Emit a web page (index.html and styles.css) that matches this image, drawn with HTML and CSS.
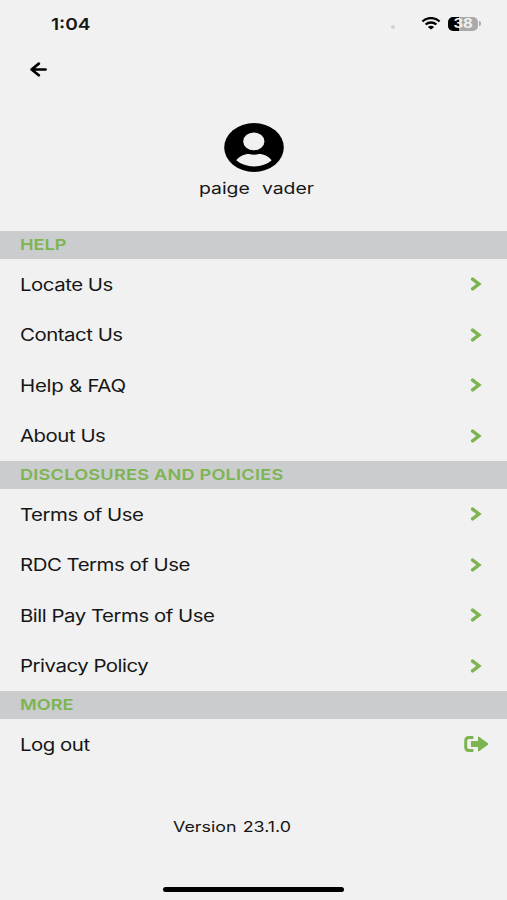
FILE: index.html
```html
<!DOCTYPE html>
<html lang="en">
<head>
  <meta charset="UTF-8">
  <meta name="viewport" content="width=device-width, initial-scale=1.0">
  <title>Menu</title>
  <link rel="stylesheet" href="styles.css">
</head>
<body>
  <svg width="0" height="0" class="defs">
    <symbol id="chevron" viewBox="0 0 12 14">
      <path d="M2.6 2.1 L8.9 7 L2.6 11.9" fill="none" stroke="#7db451" stroke-width="3.4" stroke-linecap="round"/>
    </symbol>
  </svg>

  <div class="status-bar">
    <span class="time">1:04</span>
    <div class="status-icons">
      <span class="signal-dot"></span>
      <svg class="wifi" width="20" height="13" viewBox="0 0 20 13">
        <path d="M1.4 4.5 C6 -0.1 14 -0.1 18.6 4.5 M4.6 7.5 C7.5 4.8 12.5 4.8 15.4 7.5" fill="none" stroke="#000" stroke-width="2.3"/>
        <path d="M6.8 10 Q10 7.6 13.2 10 L10 12.6 Z"/>
      </svg>
      <div class="battery"><span>38</span></div>
      <span class="battery-tip"></span>
    </div>
  </div>

  <div class="nav">
    <svg width="18" height="15" viewBox="0 0 18 15">
      <path d="M8.8 1.6 L1.6 7.5 L8.8 13.2 M2 7.5 H15.6" fill="none" stroke="#000" stroke-width="2.7" stroke-linecap="round" stroke-linejoin="round"/>
    </svg>
  </div>

  <div class="profile">
    <svg width="60" height="49" viewBox="0 0 60 49">
      <ellipse cx="30" cy="24.5" rx="29.8" ry="24.4"/>
      <ellipse cx="29.8" cy="18.4" rx="10.6" ry="8.9" fill="#f1f1f1"/>
      <path d="M12.2 37.3 C15 33.5 20 31 25 31 Q30 32.4 35 31 C40 31 45 33.5 47.6 37.3 C43 41.3 37 43.5 30 43.5 C23 43.5 17 41.3 12.2 37.3 Z" fill="#f1f1f1"/>
    </svg>
    <div class="name"><span>paige</span><span>vader</span></div>
  </div>

  <h2><span>HELP</span></h2>
  <ul>
    <li><span>Locate Us</span><svg class="chevron"><use href="#chevron"/></svg></li>
    <li><span>Contact Us</span><svg class="chevron"><use href="#chevron"/></svg></li>
    <li><span class="faq">Help &amp; FAQ</span><svg class="chevron"><use href="#chevron"/></svg></li>
    <li><span>About Us</span><svg class="chevron"><use href="#chevron"/></svg></li>
  </ul>

  <h2><span class="long">DISCLOSURES AND POLICIES</span></h2>
  <ul>
    <li><span>Terms of Use</span><svg class="chevron"><use href="#chevron"/></svg></li>
    <li><span>RDC Terms of Use</span><svg class="chevron"><use href="#chevron"/></svg></li>
    <li><span>Bill Pay Terms of Use</span><svg class="chevron"><use href="#chevron"/></svg></li>
    <li><span>Privacy Policy</span><svg class="chevron"><use href="#chevron"/></svg></li>
  </ul>

  <h2><span>MORE</span></h2>
  <ul>
    <li>
      <span>Log out</span>
      <svg class="logout" width="25" height="16" viewBox="0 0 25 16">
        <path d="M9.4 1.6 H5 Q1.7 1.6 1.7 4.8 V11.2 Q1.7 14.4 5 14.4 H9.4" fill="none" stroke="#7db451" stroke-width="3"/>
        <path d="M7.6 5 H14 V1.4 Q14 0 15.4 0.9 L24 7.2 Q24.8 8 24 8.8 L15.4 15.1 Q14 16 14 14.6 V11 H7.6 Q6.9 11 6.9 10.2 V5.8 Q6.9 5 7.6 5 Z" fill="#7db451"/>
      </svg>
    </li>
  </ul>

  <div class="version"><span>Version 23.1.0</span></div>
  <div class="home-bar"></div>
</body>
</html>
```
FILE: styles.css
```css
* {
  box-sizing: border-box;
}
html, body {
  height: 100%;
}
body {
  margin: 0;
  background: #f1f1f1;
  color: #161616;
  font-family: Inter, "Liberation Sans", sans-serif;
  font-size: 17px;
  display: flex;
  flex-direction: column;
  overflow: hidden;
}
.defs {
  position: absolute;
}
/* wide lettering */
span {
  display: inline-block;
  white-space: nowrap;
  transform-origin: left center;
}
.status-bar {
  height: 48px;
  padding: 0 26px 0 51px;
  display: flex;
  align-items: center;
  justify-content: space-between;
}
.time {
  font-size: 16.5px;
  font-weight: 600;
  transform: scaleX(1.16);
}
.status-icons {
  display: flex;
  align-items: center;
  margin-top: -1px;
}
.signal-dot {
  width: 4px;
  height: 4px;
  margin: 7px 26px 0 0;
  border-radius: 50%;
  background: #d2d2d2;
}
.wifi {
  margin-right: 7px;
}
.battery {
  width: 30px;
  height: 14px;
  border-radius: 5px;
  background: linear-gradient(to right, #000 11px, #aaa 11px);
  color: #f1f1f1;
  font-size: 12.5px;
  font-weight: 700;
  line-height: 14px;
  text-align: center;
}
.battery span {
  transform: scaleX(1.2);
  transform-origin: center;
}
.battery-tip {
  width: 2px;
  height: 5px;
  margin-left: 1px;
  border-radius: 0 2px 2px 0;
  background: #aaa;
}
.nav {
  height: 42px;
  padding: 0 30px;
  display: flex;
  align-items: center;
}
.profile {
  height: 141px;
  padding-top: 33px;
  display: flex;
  flex-direction: column;
  align-items: center;
}
.name {
  width: 115px;
  margin: 6px 0 0 6px;
  display: flex;
  justify-content: space-between;
  font-size: 16px;
  line-height: 20px;
}
.name span {
  transform: scaleX(1.21);
}
.name span:last-child {
  transform-origin: right center;
}
h2 {
  height: 28px;
  margin: 0;
  padding-left: 19.5px;
  background: #cacccd;
  color: #7db451;
  font-size: 15px;
  font-weight: 600;
  line-height: 28px;
}
h2 span {
  transform: scaleX(1.21);
}
h2 .long {
  letter-spacing: 0.18px;
}
ul {
  margin: 0;
  padding: 0;
  list-style: none;
}
li {
  height: 50.5px;
  padding: 0 18px 0 19.5px;
  display: flex;
  align-items: center;
  justify-content: space-between;
}
li span {
  padding-top: 1.4px;
  letter-spacing: -0.4px;
  transform: scaleX(1.2);
}
li .faq {
  letter-spacing: -0.2px;
}
.chevron {
  width: 12px;
  height: 14px;
  margin-right: 7px;
}
.version {
  height: 114px;
  padding: 0 0 0 173px;
  display: flex;
  align-items: center;
  font-size: 14.5px;
  word-spacing: 1px;
}
.version span {
  transform: scaleX(1.23);
}
.home-bar {
  width: 181px;
  height: 5px;
  margin: 3px 0 0 163px;
  border-radius: 3px;
  background: #000;
}
```
